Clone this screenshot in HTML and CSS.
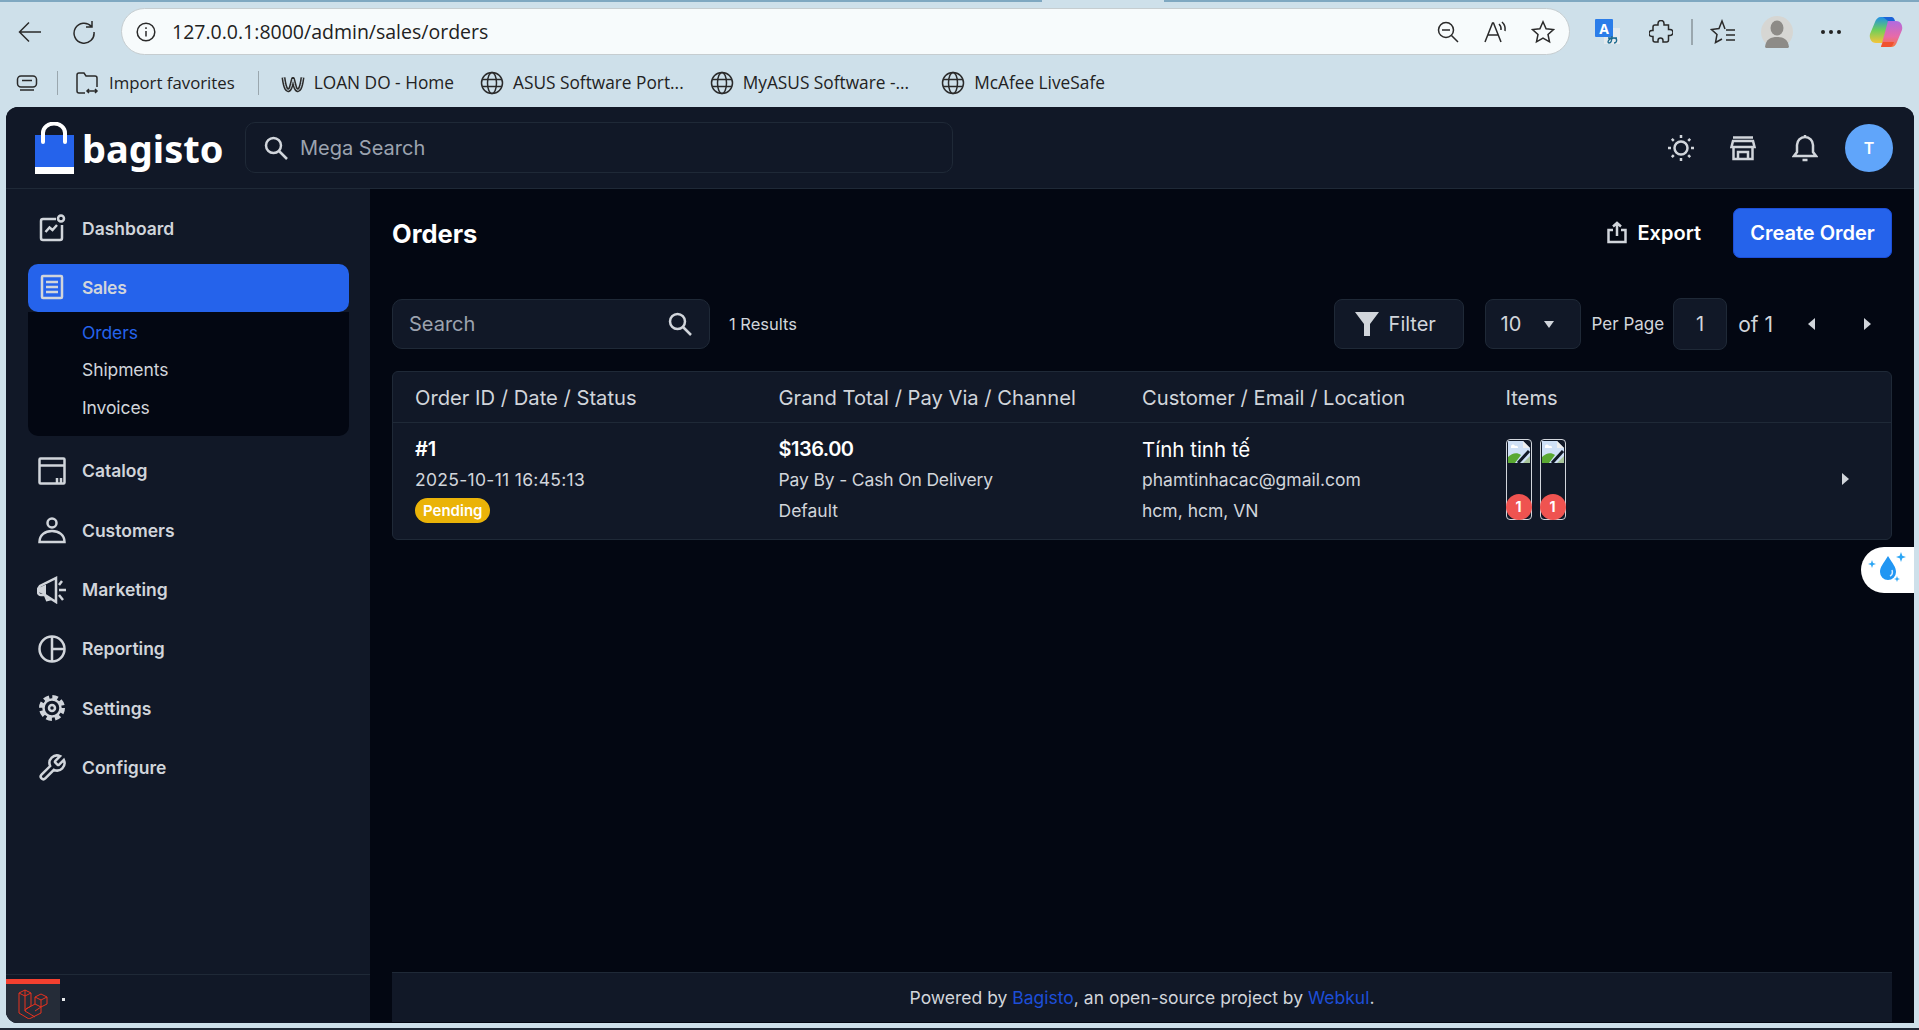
FILE: index.html
```html
<!DOCTYPE html>
<html lang="en">
<head>
  <meta charset="UTF-8">
  <title>Orders</title>
  <meta name="viewport" content="width=device-width, initial-scale=1.0">
  <link rel="stylesheet" href="styles.css">
</head>
<body>
  <div class="browser">
    <div class="tabstrip"><span></span><span></span></div>
    <div class="toolbar">
      <svg class="tb-icon" width="24" height="24" viewBox="0 0 24 24"><path d="M23 12H1.500M11 2.500 1.500 12l9.500 9.500"/></svg>
      <svg class="tb-icon reload" width="24" height="24" viewBox="0 0 24 24"><path d="M19.500 6.500A10 10 0 1 0 22 12M20 1v6h-6"/></svg>
      <div class="address">
        <svg class="tb-icon" width="20" height="20" viewBox="0 0 20 20"><circle cx="10" cy="10" r="8.800"/><path d="M10 9v5.500M10 5.300v1.600"/></svg>
        <span class="url">127.0.0.1:8000/admin/sales/orders</span>
        <svg class="tb-icon addr-end" width="22" height="22" viewBox="0 0 22 22"><circle cx="9" cy="9" r="7.500"/><path d="M5 9h8M14.500 14.500l6.500 6.500"/></svg>
        <svg class="tb-icon" width="24" height="24" viewBox="0 0 24 24"><path d="M2 22 9.500 3h1L18 22M5 15h10.500M16 4a7 7 0 0 1 2 6M19 2a10 10 0 0 1 3 9"/></svg>
        <svg class="tb-icon" width="24" height="24" viewBox="0 0 24 24"><path d="m12 1.800 3.100 6.900 7.400.8-5.500 5 1.500 7.400L12 18.200l-6.500 3.700L7 14.500l-5.500-5 7.400-.8z"/></svg>
      </div>
      <svg class="translate" width="26" height="26" viewBox="0 0 26 26">
        <rect x="9" y="9" width="16" height="16" fill="#e4eaee"/>
        <rect x="0" y="0" width="18" height="18" rx="1" fill="#2b7de9"/>
        <text x="9" y="15" class="translate-a">A</text>
        <path d="M13 19h9M17 17c0 5-1 7-3 7s-1-5 5-5c4 0 3 5 0 5" fill="none" stroke="#1b6a8f" stroke-width="1.400"/>
      </svg>
      <svg class="tb-icon puzzle" width="24" height="24" viewBox="0 0 24 24"><path d="M9 3.500a3 3 0 0 1 6 0V5h4.500v4.500H21a3 3 0 0 1 0 6h-1.500V20a2 2 0 0 1-2 2H14v-1.500a2.500 2.500 0 0 0-5 0V22H6a2 2 0 0 1-2-2v-3.500H3a3 3 0 0 1 0-6h1V7a2 2 0 0 1 2-2h3z"/></svg>
      <span class="tb-sep"></span>
      <svg class="tb-icon favs" width="26" height="26" viewBox="0 0 26 26"><path d="M15 10 12 2 9 9.500 1.500 10.500l5.500 5-1.500 8 6.500-3.500M16 11h9M16 16h9M16 21h9"/></svg>
      <div class="profile"><svg width="32" height="32" viewBox="0 0 32 32"><circle cx="16" cy="16" r="16" fill="#d6d6d3"/><ellipse cx="16" cy="12" rx="6.500" ry="7.500" fill="#8d8b87"/><path d="M4 31c1-8 6-10 12-10s11 2 12 10a16 16 0 0 1-24 0z" fill="#8d8b87"/></svg></div>
      <span class="dots"><i></i><i></i><i></i></span>
      <svg class="copilot" width="34" height="32" viewBox="0 0 34 32">
        <defs>
          <linearGradient id="copA" x1="0" y1="0" x2="0" y2="1"><stop offset="0" stop-color="#1f8fe8"/><stop offset=".5" stop-color="#6fcf5a"/><stop offset="1" stop-color="#f5c53a"/></linearGradient>
          <linearGradient id="copB" x1="0" y1="0" x2="0" y2="1"><stop offset="0" stop-color="#b06be0"/><stop offset=".6" stop-color="#e86aa8"/><stop offset="1" stop-color="#f4793b"/></linearGradient>
        </defs>
        <path d="M12 1h10l-7 26H7C2 27 0 22 1 18L6 6c1-3 3-5 6-5z" fill="url(#copA)"/>
        <path d="M22 31H12l7-26h8c5 0 7 5 6 9l-5 12c-1 3-3 5-6 5z" fill="url(#copB)"/>
        <path d="M14 1h8c1 0 3 0 4 4h-7z" fill="#1b63d8"/>
        <path d="M12 31h8c3 0 4-2 5-5h-11z" fill="#f0522f"/>
      </svg>
    </div>
    <div class="bookmarks">
      <svg class="tb-icon bm-tabs" width="22" height="20" viewBox="0 0 22 20"><rect x="1.500" y="3" width="19" height="11" rx="3.500"/><path d="M6 7.500h10M4 17h14"/></svg>
      <span class="bm-sep"></span>
      <span class="bm import"><svg class="tb-icon" width="24" height="24" viewBox="0 0 24 24"><path d="M10 22H4a2 2 0 0 1-2-2V4a2 2 0 0 1 2-2h5l2 3h9a2 2 0 0 1 2 2v9M12 20h10M14 18l-2 2 2 2M20 18l2 2-2 2"/></svg>Import favorites</span>
      <span class="bm-sep second"></span>
      <span class="bm"><svg width="24" height="20" viewBox="0 0 24 20"><path d="M2.500 4.500C4 16 6 18 8 17c2-1 2.500-6 4-11 1.500 5 2 10 4 11s4-1 5.500-12.500" fill="none" stroke="#2b2b2b" stroke-width="4" stroke-linejoin="round"/><path d="M2.500 4.500C4 16 6 18 8 17c2-1 2.500-6 4-11 1.500 5 2 10 4 11s4-1 5.500-12.500" fill="none" stroke="#cee0ea" stroke-width="1"/></svg>LOAN DO - Home</span>
      <span class="bm"><svg class="tb-icon" width="24" height="24" viewBox="0 0 24 24"><circle cx="12" cy="12" r="10.500"/><ellipse cx="12" cy="12" rx="4.500" ry="10.500"/><path d="M2 8.500h20M2 15.500h20"/></svg>ASUS Software Port...</span>
      <span class="bm wide"><svg class="tb-icon" width="24" height="24" viewBox="0 0 24 24"><circle cx="12" cy="12" r="10.500"/><ellipse cx="12" cy="12" rx="4.500" ry="10.500"/><path d="M2 8.500h20M2 15.500h20"/></svg>MyASUS Software -...</span>
      <span class="bm"><svg class="tb-icon" width="24" height="24" viewBox="0 0 24 24"><circle cx="12" cy="12" r="10.500"/><ellipse cx="12" cy="12" rx="4.500" ry="10.500"/><path d="M2 8.500h20M2 15.500h20"/></svg>McAfee LiveSafe</span>
    </div>
  </div>

  <div class="app">
    <header class="topbar">
      <div class="logo">
        <svg width="40" height="52" viewBox="0 0 40 52">
          <rect x="0" y="13" width="39" height="33" fill="#2563eb"/>
          <rect x="0" y="45" width="39" height="7" fill="#fff"/>
          <path d="M8 20V11a10.500 9 0 0 1 22 0v9" fill="none" stroke="#fff" stroke-width="4" stroke-linecap="round"/>
        </svg>
        <span>bagisto</span>
      </div>
      <div class="mega">
        <svg class="ico" width="26" height="26" viewBox="0 0 26 26"><circle cx="10.500" cy="10.500" r="7.500"/><path d="m16 16 8 8"/></svg>
        <span>Mega Search</span>
      </div>
      <div class="top-actions">
        <svg class="ico" width="28" height="28" viewBox="0 0 28 28"><circle cx="14" cy="14" r="6.500"/><path d="M14 1v3M14 24v3M1 14h3M24 14h3M4.800 4.800l2 2M21.200 21.200l2 2M4.800 23.200l2-2M21.200 6.800l2-2"/></svg>
        <svg class="ico store" width="26" height="26" viewBox="0 0 26 26"><path d="M3 2.500h20M3 6h20l1.500 6H1.500zM3.500 12v12h19V12M8 24v-7h10v7"/></svg>
        <svg class="ico bell" width="26" height="28" viewBox="0 0 26 28"><path d="M2 22h22l-3-4V11a8 8 0 0 0-16 0v7zM13 3V1M10.500 26h5"/></svg>
        <div class="avatar">T</div>
      </div>
    </header>

    <div class="body">
      <aside class="sidebar">
        <nav class="nav">
          <a class="nav-item"><svg class="ico" width="28" height="28" viewBox="0 0 28 28"><path d="M18 5H5a2 2 0 0 0-2 2v17a2 2 0 0 0 2 2h17a2 2 0 0 0 2-2V11M7.500 18l4-4.500 3 2.500 4.500-5"/><circle cx="23" cy="4.500" r="3"/></svg>Dashboard</a>
          <a class="nav-item active"><svg class="ico" width="28" height="28" viewBox="0 0 28 28"><rect x="4" y="3" width="20" height="22" rx="1"/><path d="M8 9h12M8 14h12M8 19h12"/></svg>Sales</a>
          <div class="subnav">
            <a class="current">Orders</a>
            <a>Shipments</a>
            <a>Invoices</a>
          </div>
          <a class="nav-item"><svg class="ico" width="28" height="28" viewBox="0 0 28 28"><rect x="1.500" y="1.500" width="25" height="25" rx="1"/><path d="M1.500 8.500h25M19 26v-5M23 26v-5"/></svg>Catalog</a>
          <a class="nav-item"><svg class="ico" width="28" height="28" viewBox="0 0 28 28"><circle cx="14" cy="7" r="4.500"/><path d="M1.500 26c0-7 5.500-11 12.500-11s12.500 4 12.500 11z"/></svg>Customers</a>
          <a class="nav-item"><svg class="ico" width="30" height="28" viewBox="0 0 30 28"><path class="horn" d="M8 9 1.500 12v4L8 19l1 .3V8.700z"/><path d="M19 2v24L8 19H4a3 3 0 0 1-3-3v-3l2-3 16-8zM8 19l2 5 4-1M25 5l-3 4M22 14h7M22 19l4 5"/></svg>Marketing</a>
          <a class="nav-item"><svg class="ico" width="28" height="28" viewBox="0 0 28 28"><circle cx="14" cy="14" r="12.500"/><path d="M14 1.500v25M14 14h12.500"/></svg>Reporting</a>
          <a class="nav-item"><svg class="ico" width="28" height="28" viewBox="0 0 28 28"><circle cx="14" cy="14" r="3"/><circle cx="14" cy="14" r="8.500"/><circle class="gear-teeth" cx="14" cy="14" r="11"/></svg>Settings</a>
          <a class="nav-item"><svg class="ico wrench" width="30" height="30" viewBox="0 0 24 24"><path d="M14.700 6.300a1 1 0 0 0 0 1.400l1.600 1.600a1 1 0 0 0 1.400 0l3.770-3.770a6 6 0 0 1-7.940 7.940l-6.910 6.910a2.120 2.120 0 0 1-3-3l6.910-6.910a6 6 0 0 1 7.940-7.940l-3.760 3.760z"/></svg>Configure</a>
        </nav>
        <div class="side-foot">
          <div class="debug-tab">
            <svg width="30" height="30" viewBox="0 0 30 30"><path d="M1 4 7 1l6 3v13l-5 3 9-5V8l6-3 6 3v7l-6 3v6l-12 6-10-6zM7 1v6M1 4l6 3 6-3M7 7v15l10 6M8 20l-1 2M17 15l6 3M17 8l6 3 6-3M23 11v7M17 22l6-4" fill="none" stroke="#e8321f" stroke-width="1"/></svg>
          </div>
          <span class="debug-dot"></span>
        </div>
      </aside>

      <main class="main">
        <div class="page-head">
          <h1>Orders</h1>
          <div class="head-actions">
            <span class="export"><svg class="ico" width="20" height="24" viewBox="0 0 20 24"><path d="M6 9H1.500v12h17V9H14M10 15V2M6 5.500 10 2l4 3.500"/></svg>Export</span>
            <button class="primary">Create Order</button>
          </div>
        </div>

        <div class="filters">
          <div class="search"><span>Search</span><svg class="ico" width="26" height="26" viewBox="0 0 26 26"><circle cx="10.500" cy="10.500" r="7.500"/><path d="m16 16 8 8"/></svg></div>
          <span class="results">1 Results</span>
          <div class="pager">
            <span class="box filter"><svg width="26" height="26" viewBox="0 0 26 26"><path d="M1 1h24l-9 12v12h-6V13z" fill="#d1d5db"/></svg>Filter</span>
            <span class="box per"><span>10</span><i class="caret down"></i></span>
            <span class="per-label">Per Page</span>
            <span class="box page-no">1</span>
            <span class="of">of 1</span>
            <i class="caret left"></i>
            <i class="caret right"></i>
          </div>
        </div>

        <section class="table">
          <div class="row head">
            <div>Order ID / Date / Status</div>
            <div>Grand Total / Pay Via / Channel</div>
            <div>Customer / Email / Location</div>
            <div>Items</div>
          </div>
          <div class="row order">
            <div class="cell">
              <strong>#1</strong>
              <span class="date">2025-10-11 16:45:13</span>
              <span class="pending">Pending</span>
            </div>
            <div class="cell">
              <strong class="total">$136.00</strong>
              <span class="pay">Pay By - Cash On Delivery</span>
              <span>Default</span>
            </div>
            <div class="cell">
              <span class="name">Tính tinh tế</span>
              <span>phamtinhacac@gmail.com</span>
              <span>hcm, hcm, VN</span>
            </div>
            <div class="items">
              <div class="thumb">
                <svg width="24" height="24" viewBox="0 0 24 24"><path d="M1 1h15l7 7v15H1z" fill="#cfe0f6"/><path d="M4 7a2 2 0 0 1 4-1 2 2 0 0 1 3 2H4z" fill="#fff"/><path d="M1 23v-6c4-4 9-5 13-2l-6 8z" fill="#5aa832"/><path d="M16 1v7h7z" fill="#eeeeee"/><path d="M16 23l7-7v7z" fill="#a8c49a"/><path d="M22 11 11 23" stroke="#111827" stroke-width="3"/></svg>
                <b>1</b>
              </div>
              <div class="thumb">
                <svg width="24" height="24" viewBox="0 0 24 24"><path d="M1 1h15l7 7v15H1z" fill="#cfe0f6"/><path d="M4 7a2 2 0 0 1 4-1 2 2 0 0 1 3 2H4z" fill="#fff"/><path d="M1 23v-6c4-4 9-5 13-2l-6 8z" fill="#5aa832"/><path d="M16 1v7h7z" fill="#eeeeee"/><path d="M16 23l7-7v7z" fill="#a8c49a"/><path d="M22 11 11 23" stroke="#111827" stroke-width="3"/></svg>
                <b>1</b>
              </div>
              <i class="caret right row-arrow"></i>
            </div>
          </div>
        </section>

        <div class="helper">
          <svg width="44" height="36" viewBox="0 0 44 36">
            <path d="M22 4c5 8 8 11 8 16a8 8 0 0 1-16 0c0-5 3-8 8-16z" fill="#2196f3"/>
            <path d="M26 18c1 3 0 5-2 6" fill="none" stroke="#d6ecff" stroke-width="1.500"/>
            <path d="M35 0l1.300 3.700L40 5l-3.700 1.300L35 10l-1.300-3.700L30 5l3.700-1.300zM6 8l1 3 3 1-3 1-1 3-1-3-3-1 3-1zM31 24l.8 2.200L34 27l-2.200.8L31 30l-.8-2.200L28 27l2.200-.8z" fill="#2ba6f5"/>
          </svg>
        </div>

        <footer class="foot">Powered by <a>Bagisto</a>, an open-source project by <a>Webkul</a>.</footer>
      </main>
    </div>
  </div>
</body>
</html>
```

FILE: styles.css
```css
* {
  box-sizing: border-box;
}
html, body {
  height: 100%;
}
body {
  margin: 0;
  background: #cee0ea;
  display: flex;
  flex-direction: column;
  overflow: hidden;
  font-family: Inter, "Noto Sans", sans-serif;
  color: #d1d5db;
  border-bottom: 2px solid #1f2937;
}
svg {
  flex: none;
  display: block;
}

/* browser chrome */
.browser {
  height: 107px;
  flex: none;
  font-family: "Open Sans", "Noto Sans", sans-serif;
  color: #222;
}
.tabstrip {
  height: 2px;
  display: flex;
  gap: 122px;
}
.tabstrip span {
  background: #7fa8c1;
}
.tabstrip span:first-child {
  width: 1042px;
}
.tabstrip span:last-child {
  flex: 1;
}
.tb-icon {
  fill: none;
  stroke: #2a2a2a;
  stroke-width: 1.500;
}
.toolbar {
  height: 59px;
  display: flex;
  align-items: center;
  padding-left: 18px;
}
.reload {
  margin-left: 30px;
}
.address {
  width: 1449px;
  height: 47px;
  margin-left: 25px;
  padding: 0 14px 0 14px;
  border: 1.500px solid #c6cdd0;
  border-radius: 24px;
  background: #f7fbfc;
  display: flex;
  align-items: center;
  gap: 24px;
}
.url {
  font-size: 19.500px;
  margin-left: -8px;
}
.addr-end {
  margin-left: auto;
}
.translate {
  margin-left: 25px;
}
.translate-a {
  font: 700 14px "Noto Sans", sans-serif;
  fill: #fff;
  text-anchor: middle;
}
.puzzle {
  margin-left: 28px;
}
.tb-sep {
  width: 2px;
  height: 26px;
  margin-left: 18px;
  background: #9aa7ae;
}
.favs {
  margin-left: 17px;
}
.profile {
  margin-left: 25px;
}
.dots {
  display: flex;
  gap: 4px;
  margin-left: 28px;
}
.dots i {
  width: 4px;
  height: 4px;
  border-radius: 50%;
  background: #222;
}
.copilot {
  margin-left: 28px;
}
.bookmarks {
  height: 43px;
  display: flex;
  align-items: center;
  padding-left: 16px;
  font-size: 17.300px;
}
.bm {
  display: flex;
  align-items: center;
  gap: 9px;
  margin-right: 26px;
  white-space: nowrap;
}
.bm.wide {
  margin-right: 32px;
}
.import {
  gap: 10px;
  margin-right: 0;
  font-size: 16.800px;
}
.bm-sep {
  width: 1px;
  height: 24px;
  margin: 0 17px 0 19px;
  background: #9aa7ae;
}
.bm-sep.second {
  margin: 0 22px 0 23px;
}

/* app window */
.app {
  flex: 1;
  min-height: 0;
  margin: 0 5px 5px 6px;
  border-radius: 12px 12px 0 12px;
  overflow: hidden;
  background: #030712;
  display: flex;
  flex-direction: column;
}
.ico {
  fill: none;
  stroke: #d1d5db;
  stroke-width: 2.500;
}
.horn {
  fill: #d1d5db;
  stroke: none;
}
.wrench {
  stroke-width: 2;
}
.topbar {
  height: 82px;
  flex: none;
  background: #111827;
  border-bottom: 1px solid #1f2937;
  display: flex;
  align-items: center;
  padding: 0 21px 0 29px;
}
.logo {
  width: 210px;
  display: flex;
  align-items: center;
  gap: 7px;
  font-family: "Noto Sans", sans-serif;
  font-weight: 700;
  font-size: 38px;
  color: #fff;
}
.mega {
  width: 708px;
  height: 51px;
  border: 1px solid #1f2937;
  border-radius: 10px;
  display: flex;
  align-items: center;
  gap: 11px;
  padding-left: 17px;
  font-size: 20px;
  color: #9ca3af;
}
.top-actions {
  margin-left: auto;
  display: flex;
  align-items: center;
}
.store {
  margin-left: 35px;
}
.bell {
  margin-left: 36px;
}
.avatar {
  width: 48px;
  height: 48px;
  margin-left: 27px;
  border-radius: 50%;
  background: #60a5fa;
  color: #fff;
  font-size: 16px;
  font-weight: 600;
  display: flex;
  align-items: center;
  justify-content: center;
}
.body {
  flex: 1;
  min-height: 0;
  display: flex;
}

/* sidebar */
.sidebar {
  width: 364px;
  flex: none;
  background: #111827;
  display: flex;
  flex-direction: column;
}
.nav {
  flex: 1;
  padding: 16px 21px 0 22px;
  display: flex;
  flex-direction: column;
  gap: 11.400px;
}
.nav-item {
  height: 48px;
  flex: none;
  display: flex;
  align-items: center;
  padding: 0 0 2px 10px;
  border-radius: 10px;
  font-size: 17.500px;
  font-weight: 600;
}
.nav-item .ico {
  margin-right: 16px;
}
.nav-item svg[width="30"] {
  margin-left: -1px;
  margin-right: 15px;
}
.active {
  background: #2563eb;
  letter-spacing: -.3px;
}
.gear-teeth {
  stroke-width: 4;
  stroke-dasharray: 5.500 3.140;
}
.subnav {
  margin-top: -11.400px;
  height: 124px;
  flex: none;
  background: #030712;
  border-radius: 0 0 10px 10px;
  display: flex;
  flex-direction: column;
  padding: 1px 0 0 54px;
  font-size: 17.500px;
  letter-spacing: -.1px;
}
.subnav a {
  height: 37.500px;
  display: flex;
  align-items: center;
}
.current {
  color: #2563eb;
}
.side-foot {
  height: 49px;
  flex: none;
  border-top: 1px solid #1f2937;
  display: flex;
  align-items: flex-end;
}
.debug-tab {
  width: 54px;
  height: 44px;
  background: #252c38;
  border-top: 5px solid #f4402f;
  display: flex;
  align-items: center;
  justify-content: center;
}
.debug-dot {
  width: 3px;
  height: 3px;
  margin: 0 0 22px 2px;
  background: #e5e7eb;
}

/* main column */
.main {
  position: relative;
  flex: 1;
  min-width: 0;
  padding: 0 22px 1px;
  display: flex;
  flex-direction: column;
}
.page-head {
  display: flex;
  align-items: center;
  justify-content: space-between;
  padding-top: 19px;
}
h1 {
  margin: 0;
  font-size: 25.500px;
  font-weight: 700;
  color: #fff;
}
.head-actions {
  display: flex;
  align-items: center;
  gap: 32px;
}
.export {
  display: flex;
  align-items: center;
  gap: 10px;
  font-size: 20px;
  font-weight: 600;
  color: #fff;
}
.primary {
  width: 159px;
  height: 50px;
  border: 1px solid #1d4ed8;
  border-radius: 7px;
  background: #2563eb;
  color: #fff;
  font: 600 20px Inter, sans-serif;
  padding: 0;
}
.filters {
  display: flex;
  align-items: center;
  margin-top: 40px;
  height: 52px;
}
.search {
  width: 318px;
  height: 50px;
  border: 1px solid #1f2937;
  border-radius: 10px;
  background: #111827;
  display: flex;
  align-items: center;
  justify-content: space-between;
  padding: 0 16px 0 16px;
  font-size: 20px;
  color: #9ca3af;
}
.results {
  margin-left: 19px;
  font-size: 16.500px;
}
.pager {
  margin-left: auto;
  display: flex;
  align-items: center;
  font-size: 20px;
}
.box {
  height: 50px;
  border: 1px solid #1f2937;
  border-radius: 8px;
  background: #111827;
  display: flex;
  align-items: center;
}
.filter {
  width: 130px;
  padding-left: 19px;
  gap: 9px;
}
.per {
  width: 96px;
  margin-left: 21px;
  padding: 0 0 0 15px;
  gap: 23px;
}
.per-label {
  margin-left: 11px;
  font-size: 17px;
}
.page-no {
  width: 54px;
  height: 52px;
  margin-left: 9px;
  justify-content: center;
}
.of {
  margin-left: 11px;
  font-size: 21px;
}
.caret {
  display: block;
  width: 0;
  height: 0;
  border: 6px solid transparent;
}
.caret.down {
  border-width: 6px 5.500px 0;
  border-top: 7px solid #d1d5db;
}
.caret.left {
  margin-left: 35px;
  border-right: 7px solid #d1d5db;
  border-left: 0;
}
.caret.right {
  margin-left: 49px;
  margin-right: 21px;
  border-left: 7px solid #d1d5db;
  border-right: 0;
}

/* orders table */
.table {
  margin-top: 21px;
  border: 1px solid #1f2937;
  border-radius: 6px;
  background: #111827;
}
.row {
  display: grid;
  grid-template-columns: repeat(4, 1fr);
  padding: 0 22px;
}
.head {
  height: 51px;
  align-items: center;
  border-bottom: 1px solid #1f2937;
  font-size: 20.200px;
}
.order {
  height: 116px;
  padding-top: 11px;
}
.cell {
  display: flex;
  flex-direction: column;
  align-items: flex-start;
  font-size: 17.500px;
}
.cell > * {
  height: 31px;
  line-height: 31px;
}
.cell > :first-child {
  height: 30px;
}
.cell strong {
  font-size: 20px;
  font-weight: 600;
  color: #fff;
}
.date {
  letter-spacing: .3px;
}
.pay {
  letter-spacing: -.15px;
}
.cell .total {
  letter-spacing: -.5px;
}
.name {
  font-size: 20.500px;
  color: #fff;
}
.cell .pending {
  height: 25px;
  line-height: 25px;
  margin-top: 3px;
  padding: 0 8px;
  border-radius: 13px;
  background: #eab308;
  color: #fff;
  font-size: 15px;
  font-weight: 600;
}
.items {
  display: flex;
  align-items: flex-start;
  gap: 8px;
  padding-top: 5px;
}
.thumb {
  position: relative;
  width: 26px;
  height: 81px;
  border: 1px solid #d1d5db;
  border-radius: 4px;
}
.thumb b {
  position: absolute;
  left: -1px;
  bottom: -1px;
  width: 26px;
  height: 26px;
  border-radius: 50%;
  background: #ef5350;
  color: #fff;
  font-size: 14px;
  text-align: center;
  line-height: 26px;
}
.caret.row-arrow {
  margin: 34px 20px 0 auto;
}
.helper {
  position: absolute;
  top: 358px;
  right: 0;
  width: 53px;
  height: 46px;
  border-radius: 23px 0 0 23px;
  background: #fff;
  display: flex;
  align-items: center;
  justify-content: center;
}
.foot {
  margin-top: auto;
  height: 50px;
  background: #111827;
  border-top: 1px solid #1f2937;
  display: flex;
  align-items: center;
  justify-content: center;
  font-size: 17.500px;
  white-space: pre;
}
.foot a {
  color: #1d4ed8;
}
```
